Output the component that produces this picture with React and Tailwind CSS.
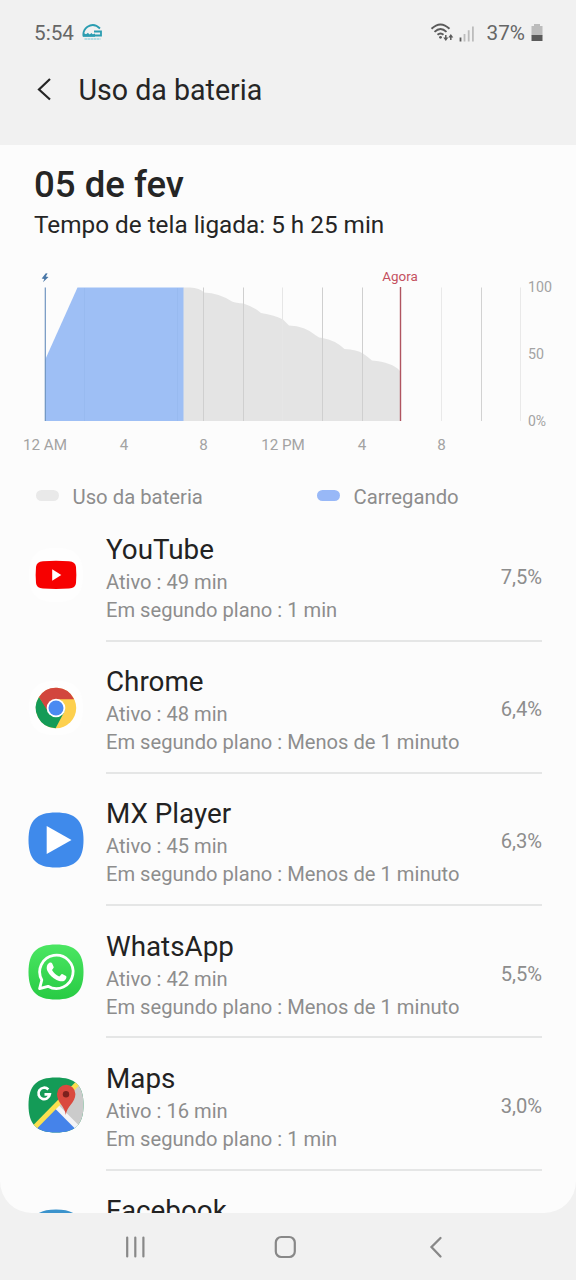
import React from "react";

function YouTubeIcon() {
  return (
    <svg viewBox="0 0 56 56" className="size-14">
      <path d="M28 1C47 1 55 8 55 28S47 55 28 55 1 48 1 28 9 1 28 1Z" fill="#fefefe" />
      <path d="M15 14.2Q28 13.3 41 14.2Q47.6 14.6 48 20Q48.7 28 48 36Q47.6 41.2 41 41.6Q28 42.5 15 41.6Q8.400 41.2 8 36Q7.300 28 8 20Q8.400 14.600 15 14.200Z" fill="#f70000" />
      <path d="M24.200 22.300V33.700L33.300 28Z" fill="#fff" />
    </svg>
  );
}

function ChromeIcon() {
  return (
    <svg viewBox="0 0 56 56" className="size-14">
      <path d="M28 1C47 1 55 8 55 28S47 55 28 55 1 48 1 28 9 1 28 1Z" fill="#fefefe" />
      <circle cx="28" cy="28" r="20.200" fill="#fdd04e" />
      <path d="M28 28L37 30.500L27.600 48.200A20.200 20.200 0 0 1 11 17L20 30Z" fill="#149b57" />
      <path d="M11 17A20.200 20.200 0 0 1 46.100 19.200H28L19.500 31Z" fill="#d2463d" />
      <circle cx="28" cy="28" r="9.300" fill="#fff" />
      <circle cx="28" cy="28" r="7.500" fill="#4a8af2" />
    </svg>
  );
}

function MxIcon() {
  return (
    <svg viewBox="0 0 56 56" className="size-14">
      <path d="M28 .5C47.500 .5 55.500 8.500 55.500 28S47.500 55.500 28 55.500 .5 47.500 .5 28 8.500 .5 28 .5Z" fill="#3f8aeb" />
      <path d="M18.700 14V42L43.500 28Z" fill="#fff" />
    </svg>
  );
}

function WhatsAppIcon() {
  return (
    <svg viewBox="0 0 56 56" className="size-14">
      <defs>
        <linearGradient id="wa" x1="0" y1="0" x2="0" y2="1">
          <stop offset="0" stopColor="#4be662" />
          <stop offset="1" stopColor="#28cb44" />
        </linearGradient>
      </defs>
      <path d="M28 .5C47.500 .5 55.500 8.500 55.500 28S47.500 55.500 28 55.500 .5 47.500 .5 28 8.500 .5 28 .5Z" fill="url(#wa)" />
      <path d="M11.600 44.600L13.800 36A16.700 16.700 0 1 1 20 42.300Z" fill="none" stroke="#fff" strokeWidth="2.800" strokeLinejoin="round" />
      <path d="M21.400 18.700C22.400 18.200 23.600 18.200 24.200 19.400L25.700 23C26.100 24 24.300 25.300 24 26.100C25.600 29.200 28 31.200 31.200 32.400C32 32.400 33.300 29.900 34.200 30.100L38 32C39 32.600 38.300 35.200 36.700 36.400C34.500 38 31.500 37.400 28.600 36C24.500 34 21.500 31 19.600 27.200C18 24.200 18.700 20.300 21.400 18.700Z" fill="#fff" />
    </svg>
  );
}

function MapsIcon() {
  return (
    <svg viewBox="0 0 56 56" className="size-14">
      <defs>
        <clipPath id="mapClip">
          <path d="M28 .5C47.500 .5 55.500 8.500 55.500 28S47.500 55.500 28 55.500 .5 47.500 .5 28 8.500 .5 28 .5Z" />
        </clipPath>
      </defs>
      <g clipPath="url(#mapClip)">
        <rect width="56" height="56" fill="#149b57" />
        <path d="M52 4L28 29L56 58V4Z" fill="#cbcbcb" />
        <path d="M28 31L2 57H54Z" fill="#4583ea" />
        <path d="M29 30L54 55" stroke="#f4f4f6" strokeWidth="5" />
        <path d="M53 3L4 53" stroke="#fbe04f" strokeWidth="5" />
        <path d="M37.800 38C37 29.500 29 25.500 29 17A9.200 9.200 0 0 1 47.400 17C47.400 25.500 38.700 29.500 37.800 38Z" fill="#da493e" />
        <circle cx="38" cy="17.200" r="3.200" fill="#7d211d" />
      </g>
      <path d="M20.300 12.500A5.700 5.700 0 1 0 21.800 17.300H16.500" fill="none" stroke="#fff" strokeWidth="2.700" />
    </svg>
  );
}

function FacebookIcon() {
  return (
    <svg viewBox="0 0 56 56" className="size-14">
      <path d="M28 .5C47.500 .5 55.500 8.500 55.500 28S47.500 55.500 28 55.500 .5 47.500 .5 28 8.500 .5 28 .5Z" fill="#3b93cc" />
    </svg>
  );
}

const apps = [
  { name: "YouTube", active: "49 min", background: "1 min", share: "7,5%", Icon: YouTubeIcon },
  { name: "Chrome", active: "48 min", background: "Menos de 1 minuto", share: "6,4%", Icon: ChromeIcon },
  { name: "MX Player", active: "45 min", background: "Menos de 1 minuto", share: "6,3%", Icon: MxIcon },
  { name: "WhatsApp", active: "42 min", background: "Menos de 1 minuto", share: "5,5%", Icon: WhatsAppIcon },
  { name: "Maps", active: "16 min", background: "1 min", share: "3,0%", Icon: MapsIcon },
  { name: "Facebook", Icon: FacebookIcon },
];

function AppRow({ name, active, background, share, Icon }) {
  return (
    <li className="flex h-[132.300px] shrink-0 pr-[34px] pl-[27.500px]">
      <div className="w-[78.500px] shrink-0 pt-[38.200px]">
        <Icon />
      </div>
      <div className="flex flex-1 border-b-2 border-[#e5e6e6] pt-[21.500px]">
        <div className="flex-1 text-[20.150px] leading-[28px] whitespace-nowrap text-[#8d8d8d]">
          <h2 className="text-[27.800px] leading-[37px] text-[#222]">{name}</h2>
          {active && <p>Ativo : {active}</p>}
          {background && <p>Em segundo plano : {background}</p>}
        </div>
        <span className="pt-[32px] text-[20.150px] leading-[28px] text-[#8d8d8d]">{share}</span>
      </div>
    </li>
  );
}

const gridLines = [
  [203.500, "#cfcfcf"],
  [243.500, "#cfcfcf"],
  [282.500, "#e6e6e6"],
  [322.500, "#cfcfcf"],
  [362.500, "#cfcfcf"],
  [441.500, "#e9e9e9"],
  [481.500, "#d2d2d2"],
  [520.500, "#e9e9e9"],
];

const hourLabels = [
  [45, "12 AM"],
  [124, "4"],
  [203.500, "8"],
  [283, "12 PM"],
  [362, "4"],
  [441.500, "8"],
];

function BatteryChart() {
  return (
    <svg viewBox="0 260 576 200" className="block h-[200px] w-full" fontFamily="Roboto, sans-serif">
      <path
        d="M183 287.500H190Q200 288 204 292.500Q219 293 232 301.500Q236 303 243.500 303.500Q254 307 261 313Q275 315 283 319.500L289 325.500Q305 326 316 335.500Q319 338 322.500 338Q335 340 344.500 349Q357 349.500 363 353.500Q368 357 372 360.500Q392 362 400 371V421H183Z"
        fill="#e4e4e4"
      />
      {gridLines.map(([x, color]) => (
        <path key={x} d={`M${x} 287.500V421`} stroke={color} />
      ))}
      <path d="M45 360L77.500 287.500H183.500V421H45Z" fill="#9ebff5" />
      <path d="M84.500 288V421M177.500 288V421" stroke="#98baf0" />
      <path d="M45.300 287.500V421" stroke="#7095c0" strokeWidth="1.200" />
      <path d="M400.500 287V421" stroke="#b05460" strokeWidth="1.400" />
      <path d="M45.800 273.300L41.700 278.500L44.300 278.900L43 282.300L48.500 276.900L45.700 276.400L47.600 273.600Z" fill="#4a78a8" />
      <text x="400" y="280.500" textAnchor="middle" fontSize="13.400" fill="#c4505f">Agora</text>
      <g fontSize="14.200" fill="#a3a3a3">
        <text x="528" y="292">100</text>
        <text x="528" y="359">50</text>
        <text x="528" y="425.500" fontSize="14">0%</text>
      </g>
      <g fontSize="15.200" fill="#a3a3a3" textAnchor="middle">
        {hourLabels.map(([x, label]) => (
          <text key={x} x={x} y="449.500">{label}</text>
        ))}
      </g>
    </svg>
  );
}

function StatusBar() {
  return (
    <div className="flex h-[66px] items-center pl-[34px] text-[20.700px] text-[#666]">
      <span className="w-[47.500px] pt-[2px]">5:54</span>
      <svg viewBox="0 0 22 18" className="h-[18px] w-[22px]">
        <path d="M18 4.500Q12-1.500 5.500 2.800Q.8 6.500 1.400 11.500H19V7.500H12" fill="none" stroke="#2b9db1" strokeWidth="1.800" />
        <path d="M1 12.800V8.800L4 10.200L6 8.800L7.500 10.800L9.500 9L10.800 10.500L13 9.500V12.800Z" fill="#2b9db1" />
        <path d="M2.500 15H18.500" stroke="#9ed5df" strokeWidth="1.700" strokeDasharray="2.500 .5" />
      </svg>
      <svg viewBox="0 0 50 24" className="ml-[326.500px] h-6 w-[50px]" fill="none" stroke="#5a5a5a">
        <path d="M1.500 7.800Q10.500-1 19.500 7.800M4.500 10.900Q10.500 5.200 16.500 10.900M7.500 13.800Q10.500 11 13.500 13.800" strokeWidth="1.900" />
        <circle cx="10.500" cy="16.300" r="1.400" fill="#5a5a5a" stroke="none" />
        <path d="M15.800 14V17M20.800 19V15.500" strokeWidth="1.500" />
        <path d="M13.300 16.500H18.300L15.800 20ZM18.300 16.500H23.300L20.800 13Z" fill="#5a5a5a" stroke="none" />
        <path d="M30.500 16.500V20.500" strokeWidth="1.800" />
        <path d="M34.500 13V20.500M38.700 9.200V20.500M42.900 5.500V20.500" stroke="#bcbcbc" strokeWidth="1.800" />
      </svg>
      <span className="ml-[6.500px] w-[44px] pt-[2px]">37%</span>
      <svg viewBox="0 0 12 18" className="h-[18px] w-3">
        <path d="M3 0H9V2H11.500V11.500H.5V2H3Z" fill="#bcbcbc" />
        <path d="M.5 11H11.500V17H.5Z" fill="#5a5a5a" />
      </svg>
    </div>
  );
}

export default function App() {
  return (
    <div className="flex h-[1280px] w-[576px] flex-col overflow-hidden bg-[#f1f1f1] font-[Roboto,sans-serif]">
      <StatusBar />
      <header className="flex h-[79px] items-start pl-[36px]">
        <svg viewBox="0 0 17 24" className="mt-[11px] h-6 w-[17px]" fill="none" stroke="#252525" strokeWidth="2.200">
          <path d="M14 2L3 12.500L14 22.500" />
        </svg>
        <h1 className="ml-[25.500px] text-[28.600px] leading-[49px] text-[#252525]">Uso da bateria</h1>
      </header>
      <main className="flex h-[1068px] flex-col overflow-hidden rounded-b-[32px] bg-[#fcfcfc]">
        <div className="h-[115px] shrink-0 pt-[18px] pl-[34px] text-[#252525]">
          <h2 className="text-[36.600px] leading-[44px] font-medium">05 de fev</h2>
          <p className="text-[24.300px] leading-[36px]">Tempo de tela ligada: 5 h 25 min</p>
        </div>
        <div className="shrink-0">
          <BatteryChart />
        </div>
        <div className="flex h-[49.300px] shrink-0 items-start pt-[24.500px] pl-[36px] text-[20.300px] leading-[24px] text-[#8d8d8d]">
          <div className="flex w-[281px] items-center gap-[13.500px]">
            <span className="mb-[2px] h-[11px] w-[23px] rounded-full bg-[#e9e9e9]" />
            Uso da bateria
          </div>
          <div className="flex items-center gap-[13.500px]">
            <span className="mb-[2px] h-[11px] w-[23px] rounded-full bg-[#98b8f7]" />
            Carregando
          </div>
        </div>
        <ul className="flex flex-col">
          {apps.map((app) => (
            <AppRow key={app.name} {...app} />
          ))}
        </ul>
      </main>
      <nav className="flex h-[67px] items-center text-[#888]">
        <svg viewBox="0 0 24 24" className="ml-[123.500px] size-6" stroke="currentColor" strokeWidth="2.200" strokeLinecap="round">
          <path d="M3.200 2.500V21.500M11.300 2.500V21.500M19.400 2.500V21.500" />
        </svg>
        <svg viewBox="0 0 24 24" className="ml-[125.500px] size-6" fill="none" stroke="currentColor" strokeWidth="2.200">
          <rect x="2.800" y="2" width="19" height="20" rx="5.500" />
        </svg>
        <svg viewBox="0 0 24 24" className="ml-[126.500px] size-6" fill="none" stroke="currentColor" strokeWidth="2.300" strokeLinecap="round">
          <path d="M16.500 3L7.500 12L16.500 21.500" />
        </svg>
      </nav>
    </div>
  );
}
